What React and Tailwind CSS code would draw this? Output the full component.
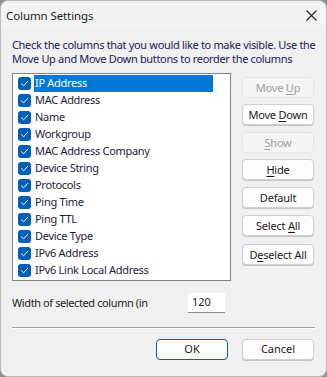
import { useState } from 'react';

const columns = [
  'IP Address',
  'MAC Address',
  'Name',
  'Workgroup',
  'MAC Address Company',
  'Device String',
  'Protocols',
  'Ping Time',
  'Ping TTL',
  'Device Type',
  'IPv6 Address',
  'IPv6 Link Local Address',
];

const CheckBox = ({ checked }) => (
  <span className="flex h-[13px] w-[13px] flex-shrink-0 items-center justify-center rounded-[3px] bg-[#005fb8]">
    {checked && (
      <svg width="9" height="9" viewBox="0 0 9 9" fill="none">
        <path d="M1.5 4.8 L3.6 6.8 L7.6 2.4" stroke="white" strokeWidth="1" strokeLinecap="round" strokeLinejoin="round" />
      </svg>
    )}
  </span>
);

// label with a mnemonic letter underlined
const Mnemonic = ({ before, letter, after }) => (
  <span>
    {before}
    <span className="underline underline-offset-2">{letter}</span>
    {after}
  </span>
);

const SideButton = ({ children, disabled, className = '' }) => (
  <button
    className={`block h-[21px] w-[72px] rounded-[4px] border text-[11px] leading-none tracking-[-0.2px] ${className} ${
      disabled
        ? 'border-[#e5e5e5] bg-[#f5f5f5] text-[#a0a0a0]'
        : 'border-[#d0d0d0] bg-[#fdfdfd] text-[#1b1b1b] shadow-[0_1px_0_#c4c4c4]'
    }`}
  >
    {children}
  </button>
);

const App = () => {
  const [selected] = useState(0);

  return (
    <div
      className="h-[377px] w-[327px] bg-[#8a8f96]"
      style={{ fontFamily: '"Noto Sans", "Open Sans", sans-serif' }}
    >
      <div className="flex h-full w-full flex-col rounded-[8px] border border-[#b9b9b9] bg-[#f0f0f0] text-[#1a1a2e]">
        {/* Title bar */}
        <div className="flex h-[29px] items-center justify-between rounded-t-[8px] bg-[#f3f3f3] pl-[5px] pr-[9px]">
          <span className="text-[11.5px] tracking-[-0.1px] text-[#1c1c1c]">Column Settings</span>
          <svg width="11" height="11" viewBox="0 0 11 11">
            <path d="M0.5 0.5 L10.5 10.5 M10.5 0.5 L0.5 10.5" stroke="#222" strokeWidth="1.1" />
          </svg>
        </div>

        {/* Instructions */}
        <div className="mt-[8px] whitespace-nowrap px-[11px] text-[11px] leading-[14px] tracking-[-0.33px] text-[#1b1b52]">
          Check the columns that you would like to make visible. Use the
          <br />
          Move Up and Move Down buttons to reorder the columns
        </div>

        <div className="mt-[7px] flex gap-[11px] px-[11px]">
          {/* Column list */}
          <div className="h-[208px] w-[219px] border border-[#838383] bg-white pl-[5px] pt-[1px]">
            {columns.map((c, i) => (
              <div key={c} className="flex h-[17px] items-center">
                <CheckBox checked />
                <span
                  className={`ml-[3px] flex h-[17px] items-center pl-[1px] text-[11px] tracking-[-0.3px] ${
                    i === selected ? 'w-[179px] bg-[#0078d7] text-white' : 'text-[#1b1b3a]'
                  }`}
                >
                  {c}
                </span>
              </div>
            ))}
          </div>

          {/* Side buttons */}
          <div className="flex flex-col pt-[4px]">
            <SideButton disabled>
              <Mnemonic before="Move " letter="U" after="p" />
            </SideButton>
            <SideButton className="mt-[6px]">
              <Mnemonic before="Move " letter="D" after="own" />
            </SideButton>
            <SideButton disabled className="mt-[7px]">
              <Mnemonic before="" letter="S" after="how" />
            </SideButton>
            <SideButton className="mt-[6px]">
              <Mnemonic before="" letter="H" after="ide" />
            </SideButton>
            <SideButton className="mt-[7px]">Default</SideButton>
            <SideButton className="mt-[7px]">
              <Mnemonic before="Select " letter="A" after="ll" />
            </SideButton>
            <SideButton className="mt-[8px]">
              <Mnemonic before="D" letter="e" after="select All" />
            </SideButton>
          </div>
        </div>

        {/* Width field */}
        <div className="mt-[12px] flex items-center px-[11px]">
          <span className="w-[176px] text-[11px] tracking-[-0.4px] text-[#1b1b1b]">Width of selected column (in</span>
          <div className="flex h-[20px] w-[37px] items-center border-b border-[#8a8a8a] bg-white pl-[4px] text-[11px] text-[#1b1b1b]">
            120
          </div>
        </div>

        <div className="mx-[11px] mt-[14px] h-[2px] border-t border-[#a0a0a0] bg-white" />

        {/* Footer */}
        <div className="mt-[10px] flex justify-end gap-[14px] pr-[12px]">
          <button className="h-[21px] w-[72px] rounded-[4px] border border-[#005fb8] bg-[#fdfdfd] text-[11px] text-[#1b1b1b]">
            OK
          </button>
          <button className="h-[21px] w-[72px] rounded-[4px] border border-[#d0d0d0] bg-[#fdfdfd] text-[11px] text-[#1b1b1b] shadow-[0_1px_0_#c4c4c4]">
            Cancel
          </button>
        </div>
      </div>
    </div>
  );
};

export default App;
